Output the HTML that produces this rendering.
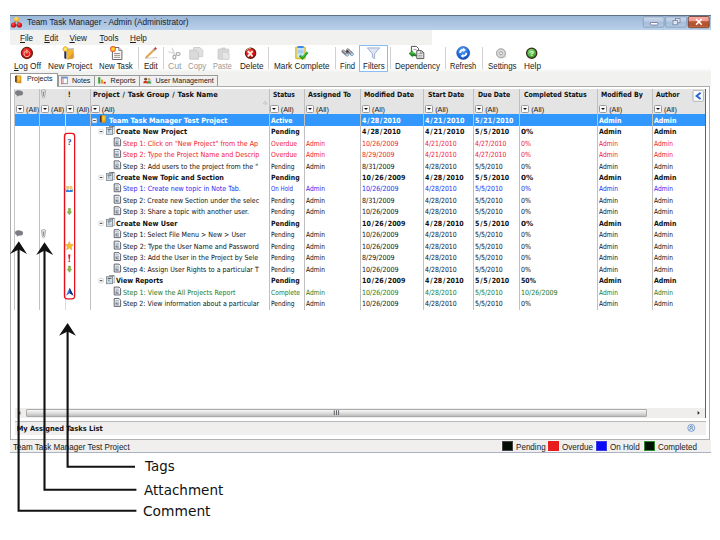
<!DOCTYPE html>
<html><head><meta charset="utf-8"><title>Team Task Manager</title>
<style>
html,body{margin:0;padding:0;background:#fff;}
body{width:720px;height:540px;position:relative;overflow:hidden;font-family:"Liberation Sans",sans-serif;}
.a{position:absolute;white-space:pre;}
.ui{font-family:"Liberation Sans",sans-serif;font-size:8.15px;color:#1a1a1a;line-height:10px;}
.g{font-family:"DejaVu Sans Condensed","DejaVu Sans","Liberation Sans",sans-serif;font-size:7.15px;line-height:11.47px;color:#111;}
.gb{font-weight:bold;}
.tab{position:absolute;font-size:7.1px;line-height:9px;color:#1a1a1a;border:1px solid #9a9a9a;border-bottom:none;background:#f0f0f0;box-sizing:border-box;}
.sep{position:absolute;width:1px;top:47px;height:22px;background:#d0d0d0;}
.vl{position:absolute;width:1px;background:#c0c0c0;top:89px;height:221px;}
.fb{position:absolute;width:8.2px;height:8.3px;border:0.8px solid #9a9a9a;border-radius:1.5px;background:#fafafa;box-sizing:border-box;}
.fb:after{content:"";position:absolute;left:1.1px;top:2.2px;border-left:2.2px solid transparent;border-right:2.2px solid transparent;border-top:2.6px solid #0a0a14;}
.lbl{position:absolute;font-family:"DejaVu Sans","Liberation Sans",sans-serif;font-size:13.9px;line-height:16px;color:#111;white-space:pre;}
</style></head><body>

<div class="a" style="left:10px;top:15px;width:700.5px;height:15px;background:linear-gradient(#9cb8d8,#b9d0ea);border-top:1px solid #5f7188;box-sizing:border-box;"></div>
<div class="a ui" style="left:27px;top:17.1px;font-size:8.9px;color:#1c1c2c;transform:scaleX(0.934);transform-origin:0 0;">Team Task Manager - Admin (Administrator)</div>
<div class="a" style="left:10px;top:30px;width:422px;height:15px;background:#f1f1f0;"></div>
<div class="a ui" style="left:20px;top:34.3px;"><u>F</u>ile</div>
<div class="a ui" style="left:44.3px;top:34.3px;"><u>E</u>dit</div>
<div class="a ui" style="left:69.5px;top:34.3px;"><u>V</u>iew</div>
<div class="a ui" style="left:99.5px;top:34.3px;"><u>T</u>ools</div>
<div class="a ui" style="left:130px;top:34.3px;"><u>H</u>elp</div>
<div class="a" style="left:10px;top:67.6px;width:700.5px;height:19.4px;background:linear-gradient(#fff 0,#f1f1f0 4px);"></div>
<div class="a" style="left:358.8px;top:45.4px;width:29.2px;height:26.2px;border:1px solid #86bef4;background:#fdfeff;box-sizing:border-box;border-radius:0.5px;"></div>
<div class="a ui" style="left:13.5px;top:61.3px;color:#1a1a1a;font-size:8.6px;transform:scaleX(0.963);transform-origin:0 0;"><u>L</u>og Off</div>
<div class="a ui" style="left:47.5px;top:61.3px;color:#1a1a1a;font-size:8.6px;transform:scaleX(0.955);transform-origin:0 0;">New Project</div>
<div class="a ui" style="left:99.3px;top:61.3px;color:#1a1a1a;font-size:8.6px;transform:scaleX(0.909);transform-origin:0 0;">New Task</div>
<div class="a ui" style="left:143.75px;top:61.3px;color:#1a1a1a;font-size:8.6px;transform:scaleX(0.928);transform-origin:0 0;">Edit</div>
<div class="a ui" style="left:167.5px;top:61.3px;color:#9a9a9a;font-size:8.6px;transform:scaleX(1.009);transform-origin:0 0;">Cut</div>
<div class="a ui" style="left:187.5px;top:61.3px;color:#9a9a9a;font-size:8.6px;transform:scaleX(0.910);transform-origin:0 0;">Copy</div>
<div class="a ui" style="left:213.25px;top:61.3px;color:#9a9a9a;font-size:8.6px;transform:scaleX(0.853);transform-origin:0 0;">Paste</div>
<div class="a ui" style="left:239.5px;top:61.3px;color:#1a1a1a;font-size:8.6px;transform:scaleX(0.946);transform-origin:0 0;">Delete</div>
<div class="a ui" style="left:273.75px;top:61.3px;color:#1a1a1a;font-size:8.6px;transform:scaleX(0.953);transform-origin:0 0;">Mark Complete</div>
<div class="a ui" style="left:340px;top:61.3px;color:#1a1a1a;font-size:8.6px;transform:scaleX(0.897);transform-origin:0 0;">Find</div>
<div class="a ui" style="left:362.5px;top:61.3px;color:#1a1a1a;font-size:8.6px;transform:scaleX(0.929);transform-origin:0 0;">Filters</div>
<div class="a ui" style="left:394.5px;top:61.3px;color:#1a1a1a;font-size:8.6px;transform:scaleX(0.932);transform-origin:0 0;">Dependency</div>
<div class="a ui" style="left:450.3px;top:61.3px;color:#1a1a1a;font-size:8.6px;transform:scaleX(0.871);transform-origin:0 0;">Refresh</div>
<div class="a ui" style="left:487.5px;top:61.3px;color:#1a1a1a;font-size:8.6px;transform:scaleX(0.918);transform-origin:0 0;">Settings</div>
<div class="a ui" style="left:523.8px;top:61.3px;color:#1a1a1a;font-size:8.6px;transform:scaleX(0.961);transform-origin:0 0;">Help</div>
<div class="sep" style="left:137.8px;"></div>
<div class="sep" style="left:163.1px;"></div>
<div class="sep" style="left:268.3px;"></div>
<div class="sep" style="left:335.0px;"></div>
<div class="sep" style="left:389.6px;"></div>
<div class="sep" style="left:445.0px;"></div>
<div class="sep" style="left:482.0px;"></div>
<div class="a" style="left:10.2px;top:85.6px;width:700px;height:354.3px;border:1px solid #adadad;border-bottom:1.8px solid #b2b2b2;background:#fff;box-sizing:border-box;"></div>
<div class="tab" style="left:57.6px;top:75px;width:37.4px;height:11px;"></div>
<div class="tab" style="left:94.2px;top:75px;width:45.4px;height:11px;"></div>
<div class="tab" style="left:138.8px;top:75px;width:79px;height:11px;"></div>
<div class="tab" style="left:10.2px;top:73.2px;width:47.8px;height:13.6px;background:#fff;"></div>
<div class="a ui" style="left:27px;top:75.2px;font-size:7.1px;line-height:9px;">Projects</div>
<div class="a ui" style="left:71.9px;top:76.5px;font-size:7.1px;line-height:9px;">Notes</div>
<div class="a ui" style="left:110.6px;top:76.5px;font-size:7.1px;line-height:9px;">Reports</div>
<div class="a ui" style="left:155.4px;top:76.5px;font-size:7.1px;line-height:9px;">User Management</div>
<div class="a" style="left:14.5px;top:88.8px;width:690px;height:25.6px;background:#e4e4e4;"></div>
<div class="fb" style="left:15.8px;top:104.9px;"></div>
<div class="a ui" style="left:26.1px;top:104.6px;font-size:7.3px;">(All)</div>
<div class="fb" style="left:40.8px;top:104.9px;"></div>
<div class="a ui" style="left:51.1px;top:104.6px;font-size:7.3px;">(All)</div>
<div class="fb" style="left:66.0px;top:104.9px;"></div>
<div class="a ui" style="left:76.4px;top:104.6px;font-size:7.3px;">(All)</div>
<div class="a g gb" style="left:93.3px;top:89.2px;transform:scaleX(1.0322);transform-origin:0 0;">Project <span style="margin:0 0.6px">/</span> Task Group <span style="margin:0 0.6px">/</span> Task Name</div>
<div class="fb" style="left:91.4px;top:104.9px;"></div>
<div class="a ui" style="left:101.8px;top:104.6px;font-size:7.3px;">(All)</div>
<div class="a g gb" style="left:273.1px;top:89.2px;transform:scaleX(0.9270);transform-origin:0 0;">Status</div>
<div class="fb" style="left:270.4px;top:104.9px;"></div>
<div class="a ui" style="left:280.8px;top:104.6px;font-size:7.3px;">(All)</div>
<div class="a g gb" style="left:307.8px;top:89.2px;transform:scaleX(0.9989);transform-origin:0 0;">Assigned To</div>
<div class="fb" style="left:305.5px;top:104.9px;"></div>
<div class="a ui" style="left:315.9px;top:104.6px;font-size:7.3px;">(All)</div>
<div class="a g gb" style="left:364.4px;top:89.2px;transform:scaleX(0.9867);transform-origin:0 0;">Modified Date</div>
<div class="fb" style="left:361.6px;top:104.9px;"></div>
<div class="a ui" style="left:372.0px;top:104.6px;font-size:7.3px;">(All)</div>
<div class="a g gb" style="left:427.5px;top:89.2px;transform:scaleX(0.9652);transform-origin:0 0;">Start Date</div>
<div class="fb" style="left:424.8px;top:104.9px;"></div>
<div class="a ui" style="left:435.2px;top:104.6px;font-size:7.3px;">(All)</div>
<div class="a g gb" style="left:477.9px;top:89.2px;transform:scaleX(0.9551);transform-origin:0 0;">Due Date</div>
<div class="fb" style="left:474.8px;top:104.9px;"></div>
<div class="a ui" style="left:485.2px;top:104.6px;font-size:7.3px;">(All)</div>
<div class="a g gb" style="left:523.5px;top:89.2px;transform:scaleX(0.9683);transform-origin:0 0;">Completed Status</div>
<div class="fb" style="left:520.8px;top:104.9px;"></div>
<div class="a ui" style="left:531.2px;top:104.6px;font-size:7.3px;">(All)</div>
<div class="a g gb" style="left:601.3px;top:89.2px;transform:scaleX(0.9799);transform-origin:0 0;">Modified By</div>
<div class="fb" style="left:598.8px;top:104.9px;"></div>
<div class="a ui" style="left:609.2px;top:104.6px;font-size:7.3px;">(All)</div>
<div class="a g gb" style="left:656.4px;top:89.2px;transform:scaleX(0.9483);transform-origin:0 0;">Author</div>
<div class="fb" style="left:653.5px;top:104.9px;"></div>
<div class="a ui" style="left:663.9px;top:104.6px;font-size:7.3px;">(All)</div>
<div class="a" style="left:14.5px;top:114.4px;width:690px;height:11.47px;background:#3398fe;"></div>
<div class="vl" style="left:39.25px;"></div>
<div class="vl" style="left:64.5px;background:#dcdcdc;"></div>
<div class="vl" style="left:89.9px;"></div>
<div class="vl" style="left:268.9px;"></div>
<div class="vl" style="left:304.0px;"></div>
<div class="vl" style="left:360.1px;"></div>
<div class="vl" style="left:423.3px;"></div>
<div class="vl" style="left:473.3px;"></div>
<div class="vl" style="left:519.3px;"></div>
<div class="vl" style="left:597.3px;"></div>
<div class="vl" style="left:652.0px;"></div>
<div class="a" style="left:14.2px;top:89px;width:1px;height:221px;background:#c4c4c4;"></div>
<div class="a" style="left:704.8px;top:89px;width:1.2px;height:329px;background:#5a50d8;"></div>
<div class="a g gb" style="left:109.3px;top:114.65px;color:#fff;transform:scaleX(1.0229);transform-origin:0 0;">Team Task Manager Test Project</div>
<div class="a g gb" style="left:270.9px;top:114.65px;color:#fff;transform:scaleX(0.9509);transform-origin:0 0;">Active</div>
<div class="a g gb" style="left:362.1px;top:114.65px;color:#fff;transform:scaleX(0.9830);transform-origin:0 0;">4<span style="margin:0 0.85px">/</span>28<span style="margin:0 0.85px">/</span>2010</div>
<div class="a g gb" style="left:425.3px;top:114.65px;color:#fff;transform:scaleX(0.9994);transform-origin:0 0;">4<span style="margin:0 0.85px">/</span>21<span style="margin:0 0.85px">/</span>2010</div>
<div class="a g gb" style="left:475.3px;top:114.65px;color:#fff;transform:scaleX(0.9741);transform-origin:0 0;">5<span style="margin:0 0.85px">/</span>21<span style="margin:0 0.85px">/</span>2010</div>
<div class="a g gb" style="left:599.3px;top:114.65px;color:#fff;transform:scaleX(0.9719);transform-origin:0 0;">Admin</div>
<div class="a g gb" style="left:654.0px;top:114.65px;color:#fff;transform:scaleX(0.9719);transform-origin:0 0;">Admin</div>
<div class="a g gb" style="left:116.2px;top:126.12px;color:#111;transform:scaleX(1.0175);transform-origin:0 0;">Create New Project</div>
<div class="a g gb" style="left:270.9px;top:126.12px;color:#111;transform:scaleX(0.9654);transform-origin:0 0;">Pending</div>
<div class="a g gb" style="left:362.1px;top:126.12px;color:#111;transform:scaleX(0.9830);transform-origin:0 0;">4<span style="margin:0 0.85px">/</span>28<span style="margin:0 0.85px">/</span>2010</div>
<div class="a g gb" style="left:425.3px;top:126.12px;color:#111;transform:scaleX(0.9994);transform-origin:0 0;">4<span style="margin:0 0.85px">/</span>21<span style="margin:0 0.85px">/</span>2010</div>
<div class="a g gb" style="left:475.3px;top:126.12px;color:#111;transform:scaleX(0.9785);transform-origin:0 0;">5<span style="margin:0 0.85px">/</span>5<span style="margin:0 0.85px">/</span>2010</div>
<div class="a g gb" style="left:521.3px;top:126.12px;color:#111;transform:scaleX(1.1278);transform-origin:0 0;">0%</div>
<div class="a g gb" style="left:599.3px;top:126.12px;color:#111;transform:scaleX(0.9719);transform-origin:0 0;">Admin</div>
<div class="a g gb" style="left:654.0px;top:126.12px;color:#111;transform:scaleX(0.9719);transform-origin:0 0;">Admin</div>
<div class="a g" style="left:123.2px;top:137.59px;color:#f0202c;transform:scaleX(0.9910);transform-origin:0 0;">Step 1: Click on "New Project" from the Ap</div>
<div class="a g" style="left:270.9px;top:137.59px;color:#f0202c;transform:scaleX(0.9476);transform-origin:0 0;">Overdue</div>
<div class="a g" style="left:306.0px;top:137.59px;color:#f0202c;transform:scaleX(0.9234);transform-origin:0 0;">Admin</div>
<div class="a g" style="left:362.1px;top:137.59px;color:#f0202c;transform:scaleX(0.9884);transform-origin:0 0;">10/26/2009</div>
<div class="a g" style="left:425.3px;top:137.59px;color:#f0202c;transform:scaleX(0.9624);transform-origin:0 0;">4/21/2010</div>
<div class="a g" style="left:475.3px;top:137.59px;color:#f0202c;transform:scaleX(0.9503);transform-origin:0 0;">4/27/2010</div>
<div class="a g" style="left:521.3px;top:137.59px;color:#f0202c;transform:scaleX(0.9801);transform-origin:0 0;">0%</div>
<div class="a g" style="left:599.3px;top:137.59px;color:#f0202c;transform:scaleX(0.9234);transform-origin:0 0;">Admin</div>
<div class="a g" style="left:654.0px;top:137.59px;color:#f0202c;transform:scaleX(0.9234);transform-origin:0 0;">Admin</div>
<div class="a g" style="left:123.2px;top:149.06px;color:#f0202c;transform:scaleX(0.9911);transform-origin:0 0;">Step 2: Type the Project Name and Descrip</div>
<div class="a g" style="left:270.9px;top:149.06px;color:#f0202c;transform:scaleX(0.9476);transform-origin:0 0;">Overdue</div>
<div class="a g" style="left:306.0px;top:149.06px;color:#f0202c;transform:scaleX(0.9234);transform-origin:0 0;">Admin</div>
<div class="a g" style="left:362.1px;top:149.06px;color:#f0202c;transform:scaleX(0.9898);transform-origin:0 0;">8/29/2009</div>
<div class="a g" style="left:425.3px;top:149.06px;color:#f0202c;transform:scaleX(0.9624);transform-origin:0 0;">4/21/2010</div>
<div class="a g" style="left:475.3px;top:149.06px;color:#f0202c;transform:scaleX(0.9503);transform-origin:0 0;">4/27/2010</div>
<div class="a g" style="left:521.3px;top:149.06px;color:#f0202c;transform:scaleX(0.9801);transform-origin:0 0;">0%</div>
<div class="a g" style="left:599.3px;top:149.06px;color:#f0202c;transform:scaleX(0.9234);transform-origin:0 0;">Admin</div>
<div class="a g" style="left:654.0px;top:149.06px;color:#f0202c;transform:scaleX(0.9234);transform-origin:0 0;">Admin</div>
<div class="a g" style="left:123.2px;top:160.53px;color:#111;transform:scaleX(0.9880);transform-origin:0 0;">Step 3: Add users to the project from the "</div>
<div class="a g" style="left:270.9px;top:160.53px;color:#111;transform:scaleX(0.9193);transform-origin:0 0;">Pending</div>
<div class="a g" style="left:306.0px;top:160.53px;color:#111;transform:scaleX(0.9234);transform-origin:0 0;">Admin</div>
<div class="a g" style="left:362.1px;top:160.53px;color:#111;transform:scaleX(0.9898);transform-origin:0 0;">8/31/2009</div>
<div class="a g" style="left:425.3px;top:160.53px;color:#111;transform:scaleX(0.9624);transform-origin:0 0;">4/28/2010</div>
<div class="a g" style="left:475.3px;top:160.53px;color:#111;transform:scaleX(0.9633);transform-origin:0 0;">5/5/2010</div>
<div class="a g" style="left:521.3px;top:160.53px;color:#111;transform:scaleX(0.9801);transform-origin:0 0;">0%</div>
<div class="a g" style="left:599.3px;top:160.53px;color:#111;transform:scaleX(0.9234);transform-origin:0 0;">Admin</div>
<div class="a g" style="left:654.0px;top:160.53px;color:#111;transform:scaleX(0.9234);transform-origin:0 0;">Admin</div>
<div class="a g gb" style="left:116.2px;top:172.00px;color:#111;transform:scaleX(1.0024);transform-origin:0 0;">Create New Topic and Section</div>
<div class="a g gb" style="left:270.9px;top:172.00px;color:#111;transform:scaleX(0.9654);transform-origin:0 0;">Pending</div>
<div class="a g gb" style="left:362.1px;top:172.00px;color:#111;transform:scaleX(0.9888);transform-origin:0 0;">10<span style="margin:0 0.85px">/</span>26<span style="margin:0 0.85px">/</span>2009</div>
<div class="a g gb" style="left:425.3px;top:172.00px;color:#111;transform:scaleX(0.9830);transform-origin:0 0;">4<span style="margin:0 0.85px">/</span>28<span style="margin:0 0.85px">/</span>2010</div>
<div class="a g gb" style="left:475.3px;top:172.00px;color:#111;transform:scaleX(0.9785);transform-origin:0 0;">5<span style="margin:0 0.85px">/</span>5<span style="margin:0 0.85px">/</span>2010</div>
<div class="a g gb" style="left:521.3px;top:172.00px;color:#111;transform:scaleX(1.1278);transform-origin:0 0;">0%</div>
<div class="a g gb" style="left:599.3px;top:172.00px;color:#111;transform:scaleX(0.9719);transform-origin:0 0;">Admin</div>
<div class="a g gb" style="left:654.0px;top:172.00px;color:#111;transform:scaleX(0.9719);transform-origin:0 0;">Admin</div>
<div class="a g" style="left:123.2px;top:183.47px;color:#2a2af0;transform:scaleX(0.9867);transform-origin:0 0;">Step 1: Create new topic in Note Tab.</div>
<div class="a g" style="left:270.9px;top:183.47px;color:#2a2af0;transform:scaleX(0.8528);transform-origin:0 0;">On Hold</div>
<div class="a g" style="left:306.0px;top:183.47px;color:#2a2af0;transform:scaleX(0.9234);transform-origin:0 0;">Admin</div>
<div class="a g" style="left:362.1px;top:183.47px;color:#2a2af0;transform:scaleX(0.9884);transform-origin:0 0;">10/26/2009</div>
<div class="a g" style="left:425.3px;top:183.47px;color:#2a2af0;transform:scaleX(0.9624);transform-origin:0 0;">4/28/2010</div>
<div class="a g" style="left:475.3px;top:183.47px;color:#2a2af0;transform:scaleX(0.9633);transform-origin:0 0;">5/5/2010</div>
<div class="a g" style="left:521.3px;top:183.47px;color:#2a2af0;transform:scaleX(0.9801);transform-origin:0 0;">0%</div>
<div class="a g" style="left:599.3px;top:183.47px;color:#2a2af0;transform:scaleX(0.9234);transform-origin:0 0;">Admin</div>
<div class="a g" style="left:654.0px;top:183.47px;color:#2a2af0;transform:scaleX(0.9234);transform-origin:0 0;">Admin</div>
<div class="a g" style="left:123.2px;top:194.94px;color:#111;transform:scaleX(0.9751);transform-origin:0 0;">Step 2: Create new Section under the selec</div>
<div class="a g" style="left:270.9px;top:194.94px;color:#111;transform:scaleX(0.9193);transform-origin:0 0;">Pending</div>
<div class="a g" style="left:306.0px;top:194.94px;color:#111;transform:scaleX(0.9234);transform-origin:0 0;">Admin</div>
<div class="a g" style="left:362.1px;top:194.94px;color:#111;transform:scaleX(0.9898);transform-origin:0 0;">8/31/2009</div>
<div class="a g" style="left:425.3px;top:194.94px;color:#111;transform:scaleX(0.9624);transform-origin:0 0;">4/28/2010</div>
<div class="a g" style="left:475.3px;top:194.94px;color:#111;transform:scaleX(0.9633);transform-origin:0 0;">5/5/2010</div>
<div class="a g" style="left:521.3px;top:194.94px;color:#111;transform:scaleX(0.9801);transform-origin:0 0;">0%</div>
<div class="a g" style="left:599.3px;top:194.94px;color:#111;transform:scaleX(0.9234);transform-origin:0 0;">Admin</div>
<div class="a g" style="left:654.0px;top:194.94px;color:#111;transform:scaleX(0.9234);transform-origin:0 0;">Admin</div>
<div class="a g" style="left:123.2px;top:206.41px;color:#111;transform:scaleX(0.9881);transform-origin:0 0;">Step 3: Share a topic with another user.</div>
<div class="a g" style="left:270.9px;top:206.41px;color:#111;transform:scaleX(0.9193);transform-origin:0 0;">Pending</div>
<div class="a g" style="left:306.0px;top:206.41px;color:#111;transform:scaleX(0.9234);transform-origin:0 0;">Admin</div>
<div class="a g" style="left:362.1px;top:206.41px;color:#111;transform:scaleX(0.9884);transform-origin:0 0;">10/26/2009</div>
<div class="a g" style="left:425.3px;top:206.41px;color:#111;transform:scaleX(0.9624);transform-origin:0 0;">4/28/2010</div>
<div class="a g" style="left:475.3px;top:206.41px;color:#111;transform:scaleX(0.9633);transform-origin:0 0;">5/5/2010</div>
<div class="a g" style="left:521.3px;top:206.41px;color:#111;transform:scaleX(0.9801);transform-origin:0 0;">0%</div>
<div class="a g" style="left:599.3px;top:206.41px;color:#111;transform:scaleX(0.9234);transform-origin:0 0;">Admin</div>
<div class="a g" style="left:654.0px;top:206.41px;color:#111;transform:scaleX(0.9234);transform-origin:0 0;">Admin</div>
<div class="a g gb" style="left:116.2px;top:217.88px;color:#111;transform:scaleX(1.0129);transform-origin:0 0;">Create New User</div>
<div class="a g gb" style="left:270.9px;top:217.88px;color:#111;transform:scaleX(0.9654);transform-origin:0 0;">Pending</div>
<div class="a g gb" style="left:362.1px;top:217.88px;color:#111;transform:scaleX(0.9888);transform-origin:0 0;">10<span style="margin:0 0.85px">/</span>26<span style="margin:0 0.85px">/</span>2009</div>
<div class="a g gb" style="left:425.3px;top:217.88px;color:#111;transform:scaleX(0.9830);transform-origin:0 0;">4<span style="margin:0 0.85px">/</span>28<span style="margin:0 0.85px">/</span>2010</div>
<div class="a g gb" style="left:475.3px;top:217.88px;color:#111;transform:scaleX(0.9785);transform-origin:0 0;">5<span style="margin:0 0.85px">/</span>5<span style="margin:0 0.85px">/</span>2010</div>
<div class="a g gb" style="left:521.3px;top:217.88px;color:#111;transform:scaleX(1.1278);transform-origin:0 0;">0%</div>
<div class="a g gb" style="left:599.3px;top:217.88px;color:#111;transform:scaleX(0.9719);transform-origin:0 0;">Admin</div>
<div class="a g gb" style="left:654.0px;top:217.88px;color:#111;transform:scaleX(0.9719);transform-origin:0 0;">Admin</div>
<div class="a g" style="left:123.2px;top:229.35px;color:#111;transform:scaleX(0.9840);transform-origin:0 0;">Step 1: Select File Menu &gt; New &gt; User</div>
<div class="a g" style="left:270.9px;top:229.35px;color:#111;transform:scaleX(0.9193);transform-origin:0 0;">Pending</div>
<div class="a g" style="left:306.0px;top:229.35px;color:#111;transform:scaleX(0.9234);transform-origin:0 0;">Admin</div>
<div class="a g" style="left:362.1px;top:229.35px;color:#111;transform:scaleX(0.9884);transform-origin:0 0;">10/26/2009</div>
<div class="a g" style="left:425.3px;top:229.35px;color:#111;transform:scaleX(0.9624);transform-origin:0 0;">4/28/2010</div>
<div class="a g" style="left:475.3px;top:229.35px;color:#111;transform:scaleX(0.9633);transform-origin:0 0;">5/5/2010</div>
<div class="a g" style="left:521.3px;top:229.35px;color:#111;transform:scaleX(0.9801);transform-origin:0 0;">0%</div>
<div class="a g" style="left:599.3px;top:229.35px;color:#111;transform:scaleX(0.9234);transform-origin:0 0;">Admin</div>
<div class="a g" style="left:654.0px;top:229.35px;color:#111;transform:scaleX(0.9234);transform-origin:0 0;">Admin</div>
<div class="a g" style="left:123.2px;top:240.82px;color:#111;transform:scaleX(0.9985);transform-origin:0 0;">Step 2: Type the User Name and Password</div>
<div class="a g" style="left:270.9px;top:240.82px;color:#111;transform:scaleX(0.9193);transform-origin:0 0;">Pending</div>
<div class="a g" style="left:306.0px;top:240.82px;color:#111;transform:scaleX(0.9234);transform-origin:0 0;">Admin</div>
<div class="a g" style="left:362.1px;top:240.82px;color:#111;transform:scaleX(0.9884);transform-origin:0 0;">10/26/2009</div>
<div class="a g" style="left:425.3px;top:240.82px;color:#111;transform:scaleX(0.9624);transform-origin:0 0;">4/28/2010</div>
<div class="a g" style="left:475.3px;top:240.82px;color:#111;transform:scaleX(0.9633);transform-origin:0 0;">5/5/2010</div>
<div class="a g" style="left:521.3px;top:240.82px;color:#111;transform:scaleX(0.9801);transform-origin:0 0;">0%</div>
<div class="a g" style="left:599.3px;top:240.82px;color:#111;transform:scaleX(0.9234);transform-origin:0 0;">Admin</div>
<div class="a g" style="left:654.0px;top:240.82px;color:#111;transform:scaleX(0.9234);transform-origin:0 0;">Admin</div>
<div class="a g" style="left:123.2px;top:252.29px;color:#111;transform:scaleX(0.9871);transform-origin:0 0;">Step 3: Add the User in the Project by Sele</div>
<div class="a g" style="left:270.9px;top:252.29px;color:#111;transform:scaleX(0.9193);transform-origin:0 0;">Pending</div>
<div class="a g" style="left:306.0px;top:252.29px;color:#111;transform:scaleX(0.9234);transform-origin:0 0;">Admin</div>
<div class="a g" style="left:362.1px;top:252.29px;color:#111;transform:scaleX(0.9898);transform-origin:0 0;">8/29/2009</div>
<div class="a g" style="left:425.3px;top:252.29px;color:#111;transform:scaleX(0.9624);transform-origin:0 0;">4/28/2010</div>
<div class="a g" style="left:475.3px;top:252.29px;color:#111;transform:scaleX(0.9633);transform-origin:0 0;">5/5/2010</div>
<div class="a g" style="left:521.3px;top:252.29px;color:#111;transform:scaleX(0.9801);transform-origin:0 0;">0%</div>
<div class="a g" style="left:599.3px;top:252.29px;color:#111;transform:scaleX(0.9234);transform-origin:0 0;">Admin</div>
<div class="a g" style="left:654.0px;top:252.29px;color:#111;transform:scaleX(0.9234);transform-origin:0 0;">Admin</div>
<div class="a g" style="left:123.2px;top:263.76px;color:#111;transform:scaleX(0.9814);transform-origin:0 0;">Step 4: Assign User Rights to a particular T</div>
<div class="a g" style="left:270.9px;top:263.76px;color:#111;transform:scaleX(0.9193);transform-origin:0 0;">Pending</div>
<div class="a g" style="left:306.0px;top:263.76px;color:#111;transform:scaleX(0.9234);transform-origin:0 0;">Admin</div>
<div class="a g" style="left:362.1px;top:263.76px;color:#111;transform:scaleX(0.9884);transform-origin:0 0;">10/26/2009</div>
<div class="a g" style="left:425.3px;top:263.76px;color:#111;transform:scaleX(0.9624);transform-origin:0 0;">4/28/2010</div>
<div class="a g" style="left:475.3px;top:263.76px;color:#111;transform:scaleX(0.9633);transform-origin:0 0;">5/5/2010</div>
<div class="a g" style="left:521.3px;top:263.76px;color:#111;transform:scaleX(0.9801);transform-origin:0 0;">0%</div>
<div class="a g" style="left:599.3px;top:263.76px;color:#111;transform:scaleX(0.9234);transform-origin:0 0;">Admin</div>
<div class="a g" style="left:654.0px;top:263.76px;color:#111;transform:scaleX(0.9234);transform-origin:0 0;">Admin</div>
<div class="a g gb" style="left:116.2px;top:275.23px;color:#111;transform:scaleX(0.9819);transform-origin:0 0;">View Reports</div>
<div class="a g gb" style="left:270.9px;top:275.23px;color:#111;transform:scaleX(0.9654);transform-origin:0 0;">Pending</div>
<div class="a g gb" style="left:362.1px;top:275.23px;color:#111;transform:scaleX(0.9888);transform-origin:0 0;">10<span style="margin:0 0.85px">/</span>26<span style="margin:0 0.85px">/</span>2009</div>
<div class="a g gb" style="left:425.3px;top:275.23px;color:#111;transform:scaleX(0.9830);transform-origin:0 0;">4<span style="margin:0 0.85px">/</span>28<span style="margin:0 0.85px">/</span>2010</div>
<div class="a g gb" style="left:475.3px;top:275.23px;color:#111;transform:scaleX(0.9785);transform-origin:0 0;">5<span style="margin:0 0.85px">/</span>5<span style="margin:0 0.85px">/</span>2010</div>
<div class="a g gb" style="left:521.3px;top:275.23px;color:#111;transform:scaleX(0.9700);transform-origin:0 0;">50%</div>
<div class="a g gb" style="left:599.3px;top:275.23px;color:#111;transform:scaleX(0.9719);transform-origin:0 0;">Admin</div>
<div class="a g gb" style="left:654.0px;top:275.23px;color:#111;transform:scaleX(0.9719);transform-origin:0 0;">Admin</div>
<div class="a g" style="left:123.2px;top:286.70px;color:#1a7a1a;transform:scaleX(0.9919);transform-origin:0 0;">Step 1: View the All Projects Report</div>
<div class="a g" style="left:270.9px;top:286.70px;color:#1a7a1a;transform:scaleX(0.9364);transform-origin:0 0;">Complete</div>
<div class="a g" style="left:306.0px;top:286.70px;color:#1a7a1a;transform:scaleX(0.9234);transform-origin:0 0;">Admin</div>
<div class="a g" style="left:362.1px;top:286.70px;color:#1a7a1a;transform:scaleX(0.9884);transform-origin:0 0;">10/26/2009</div>
<div class="a g" style="left:425.3px;top:286.70px;color:#1a7a1a;transform:scaleX(0.9624);transform-origin:0 0;">4/28/2010</div>
<div class="a g" style="left:475.3px;top:286.70px;color:#1a7a1a;transform:scaleX(0.9633);transform-origin:0 0;">5/5/2010</div>
<div class="a g" style="left:521.3px;top:286.70px;color:#1a7a1a;transform:scaleX(0.9884);transform-origin:0 0;">10/26/2009</div>
<div class="a g" style="left:599.3px;top:286.70px;color:#1a7a1a;transform:scaleX(0.9234);transform-origin:0 0;">Admin</div>
<div class="a g" style="left:654.0px;top:286.70px;color:#1a7a1a;transform:scaleX(0.9234);transform-origin:0 0;">Admin</div>
<div class="a g" style="left:123.2px;top:298.17px;color:#111;transform:scaleX(0.9805);transform-origin:0 0;">Step 2: View information about a particular</div>
<div class="a g" style="left:270.9px;top:298.17px;color:#111;transform:scaleX(0.9193);transform-origin:0 0;">Pending</div>
<div class="a g" style="left:306.0px;top:298.17px;color:#111;transform:scaleX(0.9234);transform-origin:0 0;">Admin</div>
<div class="a g" style="left:362.1px;top:298.17px;color:#111;transform:scaleX(0.9884);transform-origin:0 0;">10/26/2009</div>
<div class="a g" style="left:425.3px;top:298.17px;color:#111;transform:scaleX(0.9624);transform-origin:0 0;">4/28/2010</div>
<div class="a g" style="left:475.3px;top:298.17px;color:#111;transform:scaleX(0.9633);transform-origin:0 0;">5/5/2010</div>
<div class="a g" style="left:521.3px;top:298.17px;color:#111;transform:scaleX(0.9801);transform-origin:0 0;">0%</div>
<div class="a g" style="left:599.3px;top:298.17px;color:#111;transform:scaleX(0.9234);transform-origin:0 0;">Admin</div>
<div class="a g" style="left:654.0px;top:298.17px;color:#111;transform:scaleX(0.9234);transform-origin:0 0;">Admin</div>
<div class="a" style="left:14.5px;top:408.4px;width:690px;height:9.2px;background:#f0eded;"></div>
<div class="a" style="left:26px;top:408.6px;width:621px;height:8.8px;background:linear-gradient(#f7f7f7,#dedede 50%,#bebebe);border:0.6px solid #aaa;border-radius:1px;box-sizing:border-box;"></div>
<div class="a" style="left:14.5px;top:421px;width:691.3px;height:13.8px;background:#f1eeee;border-top:1px solid #b8b8b8;box-sizing:border-box;"></div>
<div class="a g gb" style="left:16.7px;top:422.6px;font-size:7.38px;">My Assigned Tasks List</div>
<div class="a" style="left:10px;top:439.9px;width:700.8px;height:12.9px;background:#f1eeee;border-bottom:1.3px solid #aab4c4;box-sizing:border-box;"></div>
<div class="a ui" style="left:13.3px;top:441.6px;font-size:8.6px;transform:scaleX(0.938);transform-origin:0 0;">Team Task Manager Test Project</div>
<div class="a" style="left:502px;top:441.2px;width:10.6px;height:9.4px;background:#050d05;border:0.8px solid #444;box-sizing:border-box;box-shadow:0 0 0 0.6px #f8f8f8;"></div>
<div class="a ui" style="left:515.8px;top:441.6px;font-size:8.6px;transform:scaleX(0.94);transform-origin:0 0;">Pending</div>
<div class="a" style="left:548.3px;top:441.2px;width:10.6px;height:9.4px;background:#e81c1c;border:0.8px solid #e81c1c;box-sizing:border-box;box-shadow:0 0 0 0.6px #f8f8f8;"></div>
<div class="a ui" style="left:562px;top:441.6px;font-size:8.6px;transform:scaleX(0.94);transform-origin:0 0;">Overdue</div>
<div class="a" style="left:596px;top:441.2px;width:10.6px;height:9.4px;background:#0a0af8;border:0.8px solid #3a3ae0;box-sizing:border-box;box-shadow:0 0 0 0.6px #f8f8f8;"></div>
<div class="a ui" style="left:609.5px;top:441.6px;font-size:8.6px;transform:scaleX(0.94);transform-origin:0 0;">On Hold</div>
<div class="a" style="left:644px;top:441.2px;width:10.6px;height:9.4px;background:#041004;border:0.8px solid #2a8a2a;box-sizing:border-box;box-shadow:0 0 0 0.6px #f8f8f8;"></div>
<div class="a ui" style="left:657.5px;top:441.6px;font-size:8.6px;transform:scaleX(0.94);transform-origin:0 0;">Completed</div>
<svg class="a" style="left:0;top:0;" width="720" height="540" viewBox="0 0 720 540">
<defs>
<radialGradient id="gr" cx="0.4" cy="0.35" r="0.7"><stop offset="0" stop-color="#ff5a4a"/><stop offset="0.6" stop-color="#e01018"/><stop offset="1" stop-color="#a00c10"/></radialGradient>
<radialGradient id="gy" cx="0.4" cy="0.35" r="0.7"><stop offset="0" stop-color="#ffe070"/><stop offset="1" stop-color="#f0a818"/></radialGradient>
<radialGradient id="gb" cx="0.45" cy="0.3" r="0.8"><stop offset="0" stop-color="#6ab0f8"/><stop offset="0.6" stop-color="#1c66d8"/><stop offset="1" stop-color="#0a3ca0"/></radialGradient>
<radialGradient id="gs" cx="0.5" cy="0.5" r="0.5"><stop offset="0" stop-color="#fff040"/><stop offset="0.45" stop-color="#ffd020"/><stop offset="0.8" stop-color="#f87020"/><stop offset="1" stop-color="#f03028"/></radialGradient>
<radialGradient id="gg" cx="0.4" cy="0.35" r="0.7"><stop offset="0" stop-color="#8ae070"/><stop offset="1" stop-color="#2a9028"/></radialGradient>
<linearGradient id="gf" x1="0" y1="0" x2="1" y2="1"><stop offset="0" stop-color="#f8c830"/><stop offset="0.55" stop-color="#f0b020"/><stop offset="1" stop-color="#d08828"/></linearGradient>
<linearGradient id="gbtn" x1="0" y1="0" x2="0" y2="1"><stop offset="0" stop-color="#cbdaec"/><stop offset="0.5" stop-color="#b4c8e2"/><stop offset="0.5" stop-color="#a4bcd9"/><stop offset="1" stop-color="#b4cae6"/></linearGradient>
<linearGradient id="gcl" x1="0" y1="0" x2="0" y2="1"><stop offset="0" stop-color="#f6aca6"/><stop offset="0.4" stop-color="#ee9890"/><stop offset="0.46" stop-color="#b85632"/><stop offset="0.8" stop-color="#b4522e"/><stop offset="1" stop-color="#cc7850"/></linearGradient>
</defs>
<path d="M16.6 19.2 L13.5 25 H19.4 Z" fill="none" stroke="#2a2a30" stroke-width="0.8"/>
<circle cx="16.6" cy="19.2" r="2.5" fill="url(#gy)"/><circle cx="13.5" cy="25" r="2.6" fill="url(#gr)"/><circle cx="19.4" cy="25" r="2.6" fill="url(#gr)"/>
<rect x="643.3" y="16.9" width="20.8" height="10.3" rx="1.4" fill="url(#gbtn)" stroke="#7f93ae" stroke-width="0.7"/>
<rect x="665.6" y="16.9" width="21" height="10.3" rx="1.4" fill="url(#gbtn)" stroke="#7f93ae" stroke-width="0.7"/>
<rect x="688.3" y="16.5" width="20.9" height="11.2" rx="1.4" fill="url(#gcl)" stroke="#6a3828" stroke-width="0.8"/>
<rect x="650.4" y="22.5" width="7.4" height="2.5" rx="0.6" fill="#fff" stroke="#4a4878" stroke-width="0.6"/>
<rect x="675.4" y="18.6" width="4.6" height="4.2" fill="#dfe8f4" stroke="#6a7890" stroke-width="0.7"/><rect x="673" y="20.6" width="4.6" height="4.2" fill="#dfe8f4" stroke="#6a7890" stroke-width="0.7"/>
<path d="M696.5 19.5 L701.3 24.3 M701.3 19.5 L696.5 24.3" stroke="#fff" stroke-width="1.6" stroke-linecap="round"/>
<circle cx="26.9" cy="53" r="5.6" fill="url(#gr)" stroke="#6a2410" stroke-width="1.1"/>
<path d="M25.3 51.4 A2.9 2.9 0 1 0 28.5 51.4" fill="none" stroke="#f4dcc0" stroke-width="1"/><path d="M26.9 49.8 V53.2" stroke="#f4dcc0" stroke-width="1"/>
<path d="M66.2 48.8 L73.6 48 L74.4 57.6 L66.6 59 Z" fill="#aebac6"/>
<path d="M64.3 50.4 L66.3 49.4 V59.3 L64.3 58.3 Z" fill="#2a2a48"/>
<path d="M66.8 50.6 L72.8 49.2 L73.3 58.6 L66.8 59.5 Z" fill="#f4b828"/><path d="M73 52.4 L73.3 58.6 L67.6 59.4 Z" fill="#d89a34"/>
<circle cx="65.4" cy="49.1" r="2.5" fill="#f8d428" stroke="#f05a3c" stroke-width="0.7" stroke-dasharray="0.9 0.7"/><circle cx="65.3" cy="49" r="1.2" fill="#fff27a"/>
<path d="M112.4 47.5 H118.8 L121.9 50.6 V59.5 H112.4 Z" fill="#fff" stroke="#58585c" stroke-width="0.9"/><path d="M118.8 47.5 V50.6 H121.9" fill="#e4e4e4" stroke="#58585c" stroke-width="0.7"/>
<path d="M114 53.4 H120.3 M114 55.3 H120.3 M114 57.3 H120.3" stroke="#8c7c74" stroke-width="0.9"/>
<circle cx="113" cy="49" r="2.9" fill="url(#gs)"/>
<path d="M145 58.4 L157.4 57.5" stroke="#c4c4cc" stroke-width="0.8"/>
<path d="M146.6 57 L154.6 49.4" stroke="#e2aa5c" stroke-width="2.3"/><path d="M145.2 58.4 L146 56 L147.6 57.6 Z" fill="#c89050"/><path d="M154 49.9 L155.2 48.8" stroke="#8a9a98" stroke-width="2.3"/><path d="M155 49 L156.2 47.9" stroke="#e82030" stroke-width="2.3"/>
<path d="M173.4 54.6 L175.2 53.4 L172.7 47.2 L171.7 48.4 Z" fill="#dadada"/><path d="M175 54.8 L174.4 52.8 L168.2 50.7 L168.5 52.4 Z" fill="#e0e0e0"/><g fill="#fafafa" stroke="#a6a6a6" stroke-width="1.1"><ellipse cx="174.4" cy="57.1" rx="1.5" ry="2"/><ellipse cx="178.1" cy="54" rx="2" ry="1.5"/></g>
<path d="M193.6 47.5 H200 L202.8 50.3 V56.6 H193.6 Z" fill="#e0e0e0" stroke="#c4c4c4" stroke-width="0.7"/><path d="M189.7 50 H195.8 L198.6 52.8 V59.2 H189.7 Z" fill="#dadada" stroke="#c0c0c0" stroke-width="0.7"/>
<rect x="218" y="49" width="10.8" height="10.2" rx="0.8" fill="#d8d8d8" stroke="#c6c6c6" stroke-width="0.7"/><rect x="221.4" y="47.4" width="4" height="2.6" rx="0.8" fill="#cfcfcf"/><path d="M222.4 52.2 H227 L229 54.2 V59.3 H222.4 Z" fill="#e6e6e6" stroke="#cacaca" stroke-width="0.6"/>
<circle cx="250.6" cy="53.3" r="5.2" fill="url(#gr)" stroke="#5a2414" stroke-width="1.1"/><path d="M246.4 50.6 A5 5 0 0 1 251 48.2" fill="none" stroke="#d8a070" stroke-width="1"/><path d="M248.3 51.6 L252.1 55.9 M252.1 51.6 L248.3 55.9" stroke="#f8f2ea" stroke-width="1.9" stroke-linecap="round"/>
<rect x="295.4" y="47" width="10.1" height="11.9" rx="0.8" fill="#e8c62c" stroke="#d0a828" stroke-width="0.5"/><rect x="296.7" y="47.4" width="7.6" height="10.1" fill="#c2def9"/><rect x="297.6" y="50" width="5.6" height="3.2" fill="#a6ccf2"/><rect x="297.5" y="45.9" width="6.2" height="2.2" rx="0.7" fill="#3a88ea"/><path d="M297.8 54.8 H303 M297.8 56.2 H301" stroke="#e8f4ff" stroke-width="0.7"/>
<path d="M299.8 55.4 L302.5 58.3 L307.5 52.3" fill="none" stroke="#1f9a24" stroke-width="2.4"/><path d="M300.2 55 L302.5 57.4 L307 52.2" fill="none" stroke="#5cd058" stroke-width="0.9"/>
<g stroke-linecap="round"><path d="M343.2 51.3 L347 54.3 M347.8 50.2 L351.7 53.8" stroke="#7e7e82" stroke-width="3.5"/><path d="M343 50.6 L346 53 M347.6 49.6 L350.8 52.4" stroke="#dcdce0" stroke-width="0.9"/></g><circle cx="347.4" cy="51.5" r="1.2" fill="#46303e"/><circle cx="347.3" cy="54.7" r="1.55" fill="#a8dcff" stroke="#6a7078" stroke-width="0.4"/><circle cx="352" cy="54.1" r="1.55" fill="#a8dcff" stroke="#6a7078" stroke-width="0.4"/>
<path d="M367.4 47.9 H379.6 L374.6 53.8 V58.6 L372.4 57.4 V53.8 Z" fill="#dde5f3" stroke="#9aaaca" stroke-width="0.9" stroke-linejoin="round"/>
<path d="M411.4 46.4 H416.4 L418.6 48.6 V55.6 H411.4 Z" fill="#fff" stroke="#463c44" stroke-width="0.9"/><path d="M413.4 49.4 H416.6" stroke="#8a8a8a" stroke-width="0.8"/><path d="M416.8 50.6 H421.6 L423.8 52.8 V58.6 H416.8 Z" fill="#f4f4f4" stroke="#4a4a4e" stroke-width="0.9"/><path d="M418.2 53.6 H422.4 M418.2 55.4 H422.4 M418.2 57 H422.4" stroke="#8e8e8e" stroke-width="0.8"/><path d="M420.8 51.2 V53.2 M422.2 52.2 V53.4" stroke="#3a3a3a" stroke-width="0.7"/>
<path d="M409 53.6 L412.6 50.8 V52.4 Q416 52.4 416.2 56.4 Q415 54.8 412.6 55 V56.8 Z" fill="#1c9a1c" stroke="#0e7a10" stroke-width="0.5"/><path d="M410.6 53.4 L412.4 52.2 V53.2 Q414 53.2 414.8 54.2" fill="none" stroke="#8ae08a" stroke-width="0.6"/>
<circle cx="463.2" cy="53" r="6.5" fill="url(#gb)" stroke="#0a3a98" stroke-width="0.5"/>
<g fill="none" stroke="#fff" stroke-width="1.7"><path d="M460 53 Q460.2 50.1 463.4 49.9"/><path d="M466.5 52.9 Q466.3 55.8 463.1 56"/></g><path d="M463.1 47.8 L465.9 49.9 L463.1 51.8 Z M463.4 54.1 L460.6 56 L463.4 58 Z" fill="#fff"/>
<ellipse cx="502.4" cy="56.6" rx="4.2" ry="1.6" fill="#e6e6e6"/><circle cx="501" cy="53.3" r="4.6" fill="#c6c6c6" stroke="#a2a2a2" stroke-width="0.9"/><circle cx="501" cy="53.3" r="2.9" fill="none" stroke="#dedede" stroke-width="1.1"/><circle cx="501" cy="53.3" r="1.5" fill="#f2f2f2" stroke="#8e8e8e" stroke-width="0.6"/>
<circle cx="531.7" cy="53.2" r="5.1" fill="url(#gg)" stroke="#3a2c1c" stroke-width="1.3"/><text x="531.7" y="56" font-family="Liberation Sans, sans-serif" font-weight="bold" font-size="7.6" fill="#eafce0" text-anchor="middle">?</text>
<g transform="translate(15.1 75.3)"><path d="M0 0.8 L1.8 0 V7.6 L0 6.8 Z" fill="#5a3018"/><path d="M1.8 0.2 L6 0.6 V7.8 L1.8 7.6 Z" fill="url(#gf)" stroke="#b87818" stroke-width="0.4"/><path d="M2.6 2.2 L4.6 1.6 V4.2 L3.4 5.4 Z" fill="#ffd850" opacity="0.7"/></g>
<rect x="61.5" y="77" width="5.8" height="6.7" fill="#f8fbff" stroke="#7c7c84" stroke-width="0.7"/><rect x="61.5" y="77" width="5.8" height="1.5" fill="#6a92d4"/><path d="M63 78.5 V83.7" stroke="#e83030" stroke-width="0.7"/>
<rect x="98.2" y="77.2" width="2.1" height="6.4" fill="#3ea040"/><rect x="100.9" y="79.6" width="2.1" height="4" fill="#eaa020"/><rect x="103.6" y="81.8" width="2.1" height="1.8" fill="#dc2020"/>
<circle cx="145.6" cy="79.2" r="1.4" fill="#6a5030"/><circle cx="149" cy="79.4" r="1.4" fill="#c8a070"/><path d="M143.2 83.2 A2.4 2.4 0 0 1 148 83.2 Z" fill="#d83020"/><path d="M146.8 83.4 A2.3 2.3 0 0 1 151.4 83.4 Z" fill="#38a040"/><circle cx="150.6" cy="81.2" r="0.9" fill="#a0c0e8"/>
<g transform="translate(15 89.8)"><ellipse cx="3.3" cy="2.9" rx="3.3" ry="2.5" fill="#7e7e7e"/><ellipse cx="5.2" cy="3.4" rx="2.8" ry="2.4" fill="#7e7e7e"/><path d="M1.6 4.6 L2 7 L4.2 5.4 Z" fill="#7e7e7e"/><circle cx="3.6" cy="2.2" r="0.6" fill="#5a7ab8"/><circle cx="4" cy="4.2" r="0.6" fill="#5a7ab8"/></g>
<g transform="translate(41.1 89.4)"><path d="M0.3 1 Q2.4 -0.6 4.5 1 L3.5 7.8 Q2.4 9 1.3 7.8 Z" fill="#f2f2f2" stroke="#8c8c8c" stroke-width="0.7"/><path d="M2.4 2.2 V6.8" stroke="#6e6e6e" stroke-width="0.8"/><path d="M1.3 1.6 L1.9 6.4 M3.5 1.6 L2.9 6.4" stroke="#b4b4b4" stroke-width="0.5"/></g>
<text x="69.3" y="96.6" font-family="DejaVu Sans Condensed, DejaVu Sans, sans-serif" font-weight="bold" font-size="7.4" fill="#3c1612" text-anchor="middle">!</text>
<path d="M263.4 104 L265.2 101.2 L267 104 Z" fill="none" stroke="#a8a8a8" stroke-width="0.5"/>
<rect x="693" y="90.4" width="10.4" height="10.9" rx="1" fill="#fbfbfb" stroke="#9c9c9c" stroke-width="0.7"/><path d="M700.6 92.8 L696.6 95.9 L700.6 99" fill="none" stroke="#2464d0" stroke-width="1.9"/>
<g transform="translate(92 118.10)"><rect x="0.3" y="0.3" width="4.4" height="4.4" rx="0.5" fill="#fff" stroke="#c4c4c4" stroke-width="0.6"/><path d="M1.2 2.5 H3.8" stroke="#2a2a2a" stroke-width="0.9"/></g>
<g transform="translate(100 115.00)"><path d="M0 0.8 L1.8 0 V7.6 L0 6.8 Z" fill="#5a3018"/><path d="M1.8 0.2 L6 0.6 V7.8 L1.8 7.6 Z" fill="url(#gf)" stroke="#b87818" stroke-width="0.4"/><path d="M2.6 2.2 L4.6 1.6 V4.2 L3.4 5.4 Z" fill="#ffd850" opacity="0.7"/></g>
<g transform="translate(98.6 129.07)"><rect x="0.3" y="0.3" width="4.4" height="4.4" rx="0.5" fill="#fff" stroke="#c4c4c4" stroke-width="0.6"/><path d="M1.2 2.5 H3.8" stroke="#2a2a2a" stroke-width="0.9"/></g>
<g transform="translate(106 126.17)"><rect x="6.2" y="0.5" width="2.6" height="7" fill="#dbe6ee" stroke="#98a2aa" stroke-width="0.6"/><rect x="0.4" y="1.4" width="6.2" height="7" fill="#d2e2ef" stroke="#7c868e" stroke-width="0.8"/><path d="M3 0.4 H8" stroke="#5a5048" stroke-width="0.7"/><path d="M1.5 3.1 H5.4" stroke="#44484c" stroke-width="0.9"/><path d="M2 4.9 H3.6" stroke="#50565c" stroke-width="0.8"/><path d="M1.5 6.6 H5.4" stroke="#a4b4c2" stroke-width="0.7"/></g>
<g transform="translate(113.8 137.44)"><path d="M0.4 0.5 H5.2 L6.8 2.1 V8.4 H0.4 Z" fill="#f4f8fc" stroke="#55555c" stroke-width="0.9"/><path d="M1.6 2.6 H5 M1.6 4.2 H5.4 M1.6 5.6 H5.4 M1.6 7 H5.4" stroke="#8a98a8" stroke-width="0.8"/><path d="M1.8 4.6 L4.8 6.6 H1.8Z" fill="#707880"/></g>
<g transform="translate(113.8 148.91)"><path d="M0.4 0.5 H5.2 L6.8 2.1 V8.4 H0.4 Z" fill="#f4f8fc" stroke="#55555c" stroke-width="0.9"/><path d="M1.6 2.6 H5 M1.6 4.2 H5.4 M1.6 5.6 H5.4 M1.6 7 H5.4" stroke="#8a98a8" stroke-width="0.8"/><path d="M1.8 4.6 L4.8 6.6 H1.8Z" fill="#707880"/></g>
<g transform="translate(113.8 160.38)"><path d="M0.4 0.5 H5.2 L6.8 2.1 V8.4 H0.4 Z" fill="#f4f8fc" stroke="#55555c" stroke-width="0.9"/><path d="M1.6 2.6 H5 M1.6 4.2 H5.4 M1.6 5.6 H5.4 M1.6 7 H5.4" stroke="#8a98a8" stroke-width="0.8"/><path d="M1.8 4.6 L4.8 6.6 H1.8Z" fill="#707880"/></g>
<g transform="translate(98.6 174.95)"><rect x="0.3" y="0.3" width="4.4" height="4.4" rx="0.5" fill="#fff" stroke="#c4c4c4" stroke-width="0.6"/><path d="M1.2 2.5 H3.8" stroke="#2a2a2a" stroke-width="0.9"/></g>
<g transform="translate(106 172.05)"><rect x="6.2" y="0.5" width="2.6" height="7" fill="#dbe6ee" stroke="#98a2aa" stroke-width="0.6"/><rect x="0.4" y="1.4" width="6.2" height="7" fill="#d2e2ef" stroke="#7c868e" stroke-width="0.8"/><path d="M3 0.4 H8" stroke="#5a5048" stroke-width="0.7"/><path d="M1.5 3.1 H5.4" stroke="#44484c" stroke-width="0.9"/><path d="M2 4.9 H3.6" stroke="#50565c" stroke-width="0.8"/><path d="M1.5 6.6 H5.4" stroke="#a4b4c2" stroke-width="0.7"/></g>
<g transform="translate(113.8 183.32)"><path d="M0.4 0.5 H5.2 L6.8 2.1 V8.4 H0.4 Z" fill="#f4f8fc" stroke="#55555c" stroke-width="0.9"/><path d="M1.6 2.6 H5 M1.6 4.2 H5.4 M1.6 5.6 H5.4 M1.6 7 H5.4" stroke="#8a98a8" stroke-width="0.8"/><path d="M1.8 4.6 L4.8 6.6 H1.8Z" fill="#707880"/></g>
<g transform="translate(113.8 194.79)"><path d="M0.4 0.5 H5.2 L6.8 2.1 V8.4 H0.4 Z" fill="#f4f8fc" stroke="#55555c" stroke-width="0.9"/><path d="M1.6 2.6 H5 M1.6 4.2 H5.4 M1.6 5.6 H5.4 M1.6 7 H5.4" stroke="#8a98a8" stroke-width="0.8"/><path d="M1.8 4.6 L4.8 6.6 H1.8Z" fill="#707880"/></g>
<g transform="translate(113.8 206.26)"><path d="M0.4 0.5 H5.2 L6.8 2.1 V8.4 H0.4 Z" fill="#f4f8fc" stroke="#55555c" stroke-width="0.9"/><path d="M1.6 2.6 H5 M1.6 4.2 H5.4 M1.6 5.6 H5.4 M1.6 7 H5.4" stroke="#8a98a8" stroke-width="0.8"/><path d="M1.8 4.6 L4.8 6.6 H1.8Z" fill="#707880"/></g>
<g transform="translate(98.6 220.83)"><rect x="0.3" y="0.3" width="4.4" height="4.4" rx="0.5" fill="#fff" stroke="#c4c4c4" stroke-width="0.6"/><path d="M1.2 2.5 H3.8" stroke="#2a2a2a" stroke-width="0.9"/></g>
<g transform="translate(106 217.93)"><rect x="6.2" y="0.5" width="2.6" height="7" fill="#dbe6ee" stroke="#98a2aa" stroke-width="0.6"/><rect x="0.4" y="1.4" width="6.2" height="7" fill="#d2e2ef" stroke="#7c868e" stroke-width="0.8"/><path d="M3 0.4 H8" stroke="#5a5048" stroke-width="0.7"/><path d="M1.5 3.1 H5.4" stroke="#44484c" stroke-width="0.9"/><path d="M2 4.9 H3.6" stroke="#50565c" stroke-width="0.8"/><path d="M1.5 6.6 H5.4" stroke="#a4b4c2" stroke-width="0.7"/></g>
<g transform="translate(113.8 229.20)"><path d="M0.4 0.5 H5.2 L6.8 2.1 V8.4 H0.4 Z" fill="#f4f8fc" stroke="#55555c" stroke-width="0.9"/><path d="M1.6 2.6 H5 M1.6 4.2 H5.4 M1.6 5.6 H5.4 M1.6 7 H5.4" stroke="#8a98a8" stroke-width="0.8"/><path d="M1.8 4.6 L4.8 6.6 H1.8Z" fill="#707880"/></g>
<g transform="translate(113.8 240.67)"><path d="M0.4 0.5 H5.2 L6.8 2.1 V8.4 H0.4 Z" fill="#f4f8fc" stroke="#55555c" stroke-width="0.9"/><path d="M1.6 2.6 H5 M1.6 4.2 H5.4 M1.6 5.6 H5.4 M1.6 7 H5.4" stroke="#8a98a8" stroke-width="0.8"/><path d="M1.8 4.6 L4.8 6.6 H1.8Z" fill="#707880"/></g>
<g transform="translate(113.8 252.14)"><path d="M0.4 0.5 H5.2 L6.8 2.1 V8.4 H0.4 Z" fill="#f4f8fc" stroke="#55555c" stroke-width="0.9"/><path d="M1.6 2.6 H5 M1.6 4.2 H5.4 M1.6 5.6 H5.4 M1.6 7 H5.4" stroke="#8a98a8" stroke-width="0.8"/><path d="M1.8 4.6 L4.8 6.6 H1.8Z" fill="#707880"/></g>
<g transform="translate(113.8 263.61)"><path d="M0.4 0.5 H5.2 L6.8 2.1 V8.4 H0.4 Z" fill="#f4f8fc" stroke="#55555c" stroke-width="0.9"/><path d="M1.6 2.6 H5 M1.6 4.2 H5.4 M1.6 5.6 H5.4 M1.6 7 H5.4" stroke="#8a98a8" stroke-width="0.8"/><path d="M1.8 4.6 L4.8 6.6 H1.8Z" fill="#707880"/></g>
<g transform="translate(98.6 278.18)"><rect x="0.3" y="0.3" width="4.4" height="4.4" rx="0.5" fill="#fff" stroke="#c4c4c4" stroke-width="0.6"/><path d="M1.2 2.5 H3.8" stroke="#2a2a2a" stroke-width="0.9"/></g>
<g transform="translate(106 275.28)"><rect x="6.2" y="0.5" width="2.6" height="7" fill="#dbe6ee" stroke="#98a2aa" stroke-width="0.6"/><rect x="0.4" y="1.4" width="6.2" height="7" fill="#d2e2ef" stroke="#7c868e" stroke-width="0.8"/><path d="M3 0.4 H8" stroke="#5a5048" stroke-width="0.7"/><path d="M1.5 3.1 H5.4" stroke="#44484c" stroke-width="0.9"/><path d="M2 4.9 H3.6" stroke="#50565c" stroke-width="0.8"/><path d="M1.5 6.6 H5.4" stroke="#a4b4c2" stroke-width="0.7"/></g>
<g transform="translate(113.8 286.55)"><path d="M0.4 0.5 H5.2 L6.8 2.1 V8.4 H0.4 Z" fill="#f4f8fc" stroke="#55555c" stroke-width="0.9"/><path d="M1.6 2.6 H5 M1.6 4.2 H5.4 M1.6 5.6 H5.4 M1.6 7 H5.4" stroke="#8a98a8" stroke-width="0.8"/><path d="M1.8 4.6 L4.8 6.6 H1.8Z" fill="#707880"/></g>
<g transform="translate(113.8 298.02)"><path d="M0.4 0.5 H5.2 L6.8 2.1 V8.4 H0.4 Z" fill="#f4f8fc" stroke="#55555c" stroke-width="0.9"/><path d="M1.6 2.6 H5 M1.6 4.2 H5.4 M1.6 5.6 H5.4 M1.6 7 H5.4" stroke="#8a98a8" stroke-width="0.8"/><path d="M1.8 4.6 L4.8 6.6 H1.8Z" fill="#707880"/></g>
<text x="69.4" y="144.84" font-family="Liberation Serif, serif" font-weight="bold" font-size="8.6" fill="#28408c" text-anchor="middle">?</text>
<g transform="translate(65.7 185.92)"><circle cx="2" cy="1.9" r="1.7" fill="#f0c890"/><circle cx="5.2" cy="1.9" r="1.7" fill="#f0c890"/><path d="M0.4 1.4 A1.7 1.5 0 0 1 3.6 1.4 Z M3.6 1.4 A1.7 1.5 0 0 1 6.8 1.4 Z" fill="#e8c040"/><path d="M0 6.2 A2 2.6 0 0 1 4 6.2 Z" fill="#2a84e4"/><path d="M3.2 6.2 A2 2.6 0 0 1 7.2 6.2 Z" fill="#2a84e4"/><rect x="6.6" y="3.4" width="0.9" height="1.6" fill="#48b040"/><rect x="-0.3" y="3.4" width="0.8" height="1.2" fill="#c83060"/></g>
<g transform="translate(67.1 208.36)"><path d="M1.2 0 H3.4 V3.4 H4.6 L2.3 6.6 L0 3.4 H1.2 Z" fill="#84b444" stroke="#6a9a34" stroke-width="0.3"/></g>
<path transform="translate(69.25 245.97)" d="M0 -4.3 L1.25 -1.5 L4 -1.25 L1.9 0.7 L2.55 3.7 L0 2.15 L-2.55 3.7 L-1.9 0.7 L-4 -1.25 L-1.25 -1.5 Z" fill="#fabc24" stroke="#d89028" stroke-width="0.5"/>
<path d="M68.2 254.44 H70.4 L69.8 259.64 H68.8 Z" fill="#e81820"/><rect x="68.5" y="260.44" width="1.6" height="1.5" fill="#e81820"/>
<g transform="translate(67.1 265.91)"><path d="M1.2 0 H3.4 V3.4 H4.6 L2.3 6.6 L0 3.4 H1.2 Z" fill="#84b444" stroke="#6a9a34" stroke-width="0.3"/></g>
<path d="M69.7 287.85 L73.6 295.65 L69.7 293.25 L66 295.65 Z" fill="#3a6cd0"/><path d="M69.7 287.85 L73.6 295.65 L69.7 293.25 Z" fill="#10307c"/>
<g transform="translate(15 229.80)"><ellipse cx="3.3" cy="2.9" rx="3.3" ry="2.5" fill="#7e7e7e"/><ellipse cx="5.2" cy="3.4" rx="2.8" ry="2.4" fill="#7e7e7e"/><path d="M1.6 4.6 L2 7 L4.2 5.4 Z" fill="#7e7e7e"/><circle cx="3.6" cy="2.2" r="0.6" fill="#5a7ab8"/><circle cx="4" cy="4.2" r="0.6" fill="#5a7ab8"/></g>
<g transform="translate(41.1 229.30)"><path d="M0.3 1 Q2.4 -0.6 4.5 1 L3.5 7.8 Q2.4 9 1.3 7.8 Z" fill="#f2f2f2" stroke="#8c8c8c" stroke-width="0.7"/><path d="M2.4 2.2 V6.8" stroke="#6e6e6e" stroke-width="0.8"/><path d="M1.3 1.6 L1.9 6.4 M3.5 1.6 L2.9 6.4" stroke="#b4b4b4" stroke-width="0.5"/></g>
<path d="M20.4 411.2 L18.2 413 L20.4 414.8 Z" fill="#444"/><path d="M697.6 411 L699.8 412.9 L697.6 414.8 Z" fill="#222"/>
<path d="M334.3 410.2 V415 M336.5 410.2 V415 M338.6 410.2 V415" stroke="#44444c" stroke-width="0.8"/>
<circle cx="691.3" cy="427.9" r="3.5" fill="#eaf2fc" stroke="#5a8ac8" stroke-width="0.8"/><path d="M689.4 427.6 L691.3 425.9 L693.2 427.6 M689.4 429.8 L691.3 428.1 L693.2 429.8" fill="none" stroke="#28467c" stroke-width="0.8"/>
</svg>
<svg class="a" style="left:0;top:0;" width="720" height="540" viewBox="0 0 720 540">
<rect x="64.45" y="133.4" width="10.2" height="165.5" rx="2.8" ry="2.8" fill="none" stroke="#e6101a" stroke-width="1.25"/>
<g fill="none" stroke="#111" stroke-width="2.1" stroke-linejoin="miter">
<path d="M18.6 248 V510.7 H136.4"/>
<path d="M44.5 249 V489.8 H136.4"/>
<path d="M67.6 330 V466.8 H135"/>
</g>
<g fill="#111">
<path d="M18.8 241.2 L27 254 L18.8 249.6 L10 254 Z"/>
<path d="M44.5 242.2 L53.2 255 L44.5 250.6 L36.2 255 Z"/>
<path d="M67.6 323 L75.9 335.8 L67.6 331.4 L59 335.8 Z"/>
</g>
</svg>
<div class="lbl" style="left:144.9px;top:458.2px;transform:scaleX(0.965);transform-origin:0 0;">Tags</div>
<div class="lbl" style="left:143.8px;top:482.2px;transform:scaleX(0.974);transform-origin:0 0;">Attachment</div>
<div class="lbl" style="left:143.4px;top:503.2px;transform:scaleX(0.992);transform-origin:0 0;">Comment</div>
</body></html>
